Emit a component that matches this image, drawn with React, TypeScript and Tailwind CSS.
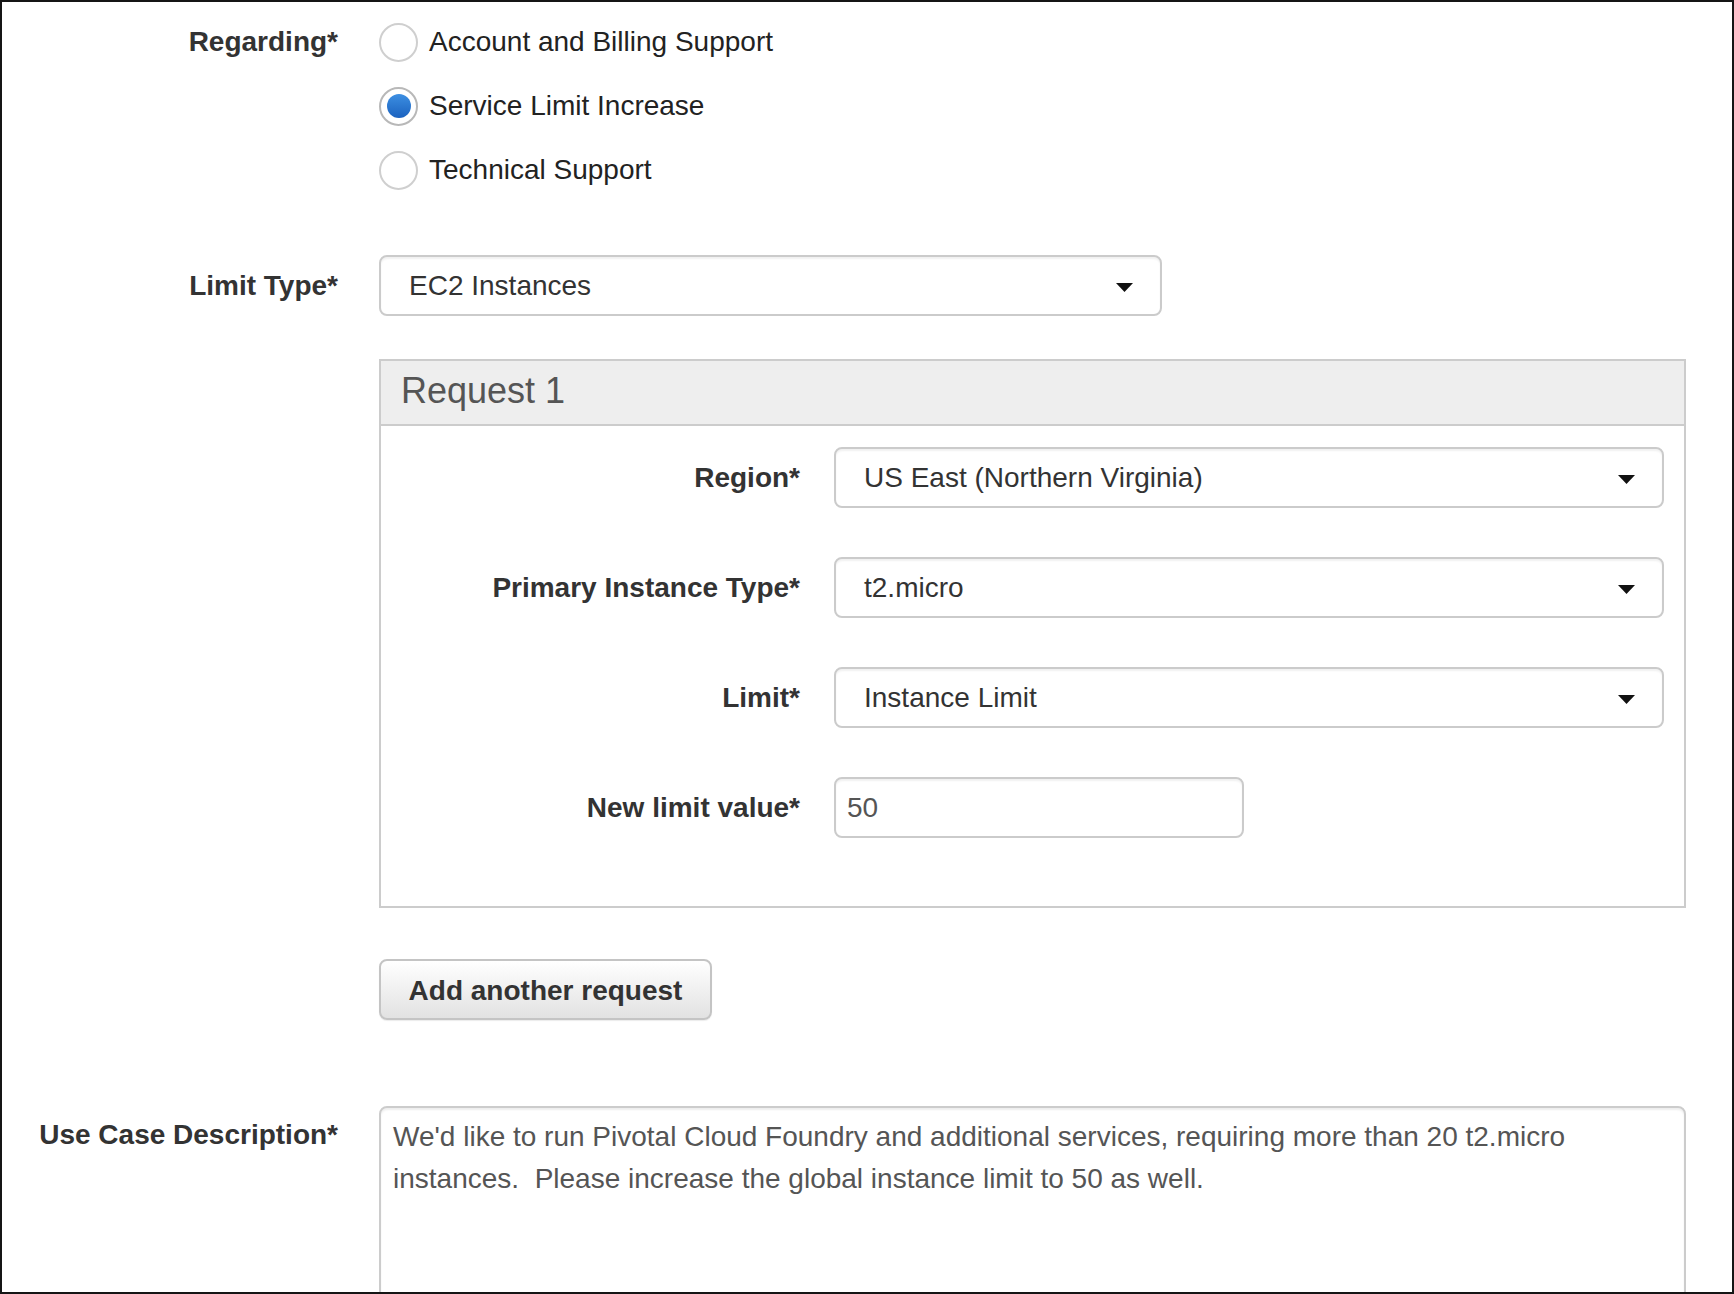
import React from 'react';

function Caret() {
  return (
    <svg width="17" height="9" viewBox="0 0 17 9" className="shrink-0 mt-[3px]">
      <path d="M0 0 L17 0 L8.5 9 Z" fill="#111" />
    </svg>
  );
}

function Select({ value, width }: { value: string; width: string }) {
  return (
    <div
      className={`${width} h-[61px] flex items-center justify-between pl-[28px] pr-[27px] bg-white border-2 border-[#cbcbcb] rounded-[8px] shadow-[inset_0_2px_2px_rgba(0,0,0,0.06)] text-[#333]`}
    >
      <span>{value}</span>
      <Caret />
    </div>
  );
}

function Radio({ label, checked }: { label: string; checked?: boolean }) {
  return (
    <div className="h-[64px] flex items-center gap-[11px]">
      <span
        className={`w-[39px] h-[39px] rounded-full border-2 bg-white flex items-center justify-center ${
          checked ? 'border-[#b8b8b8]' : 'border-[#cfcfcf]'
        }`}
      >
        {checked && (
          <span className="w-[24px] h-[24px] rounded-full bg-gradient-to-b from-[#3d8fe2] to-[#1b62bf]" />
        )}
      </span>
      <span className="text-[#222]">{label}</span>
    </div>
  );
}

export default function App() {
  return (
    <div className="w-[1734px] h-[1294px] overflow-hidden bg-white border-2 border-[#151515] font-['Liberation_Sans',Arial,sans-serif] text-[28px] leading-[40px] text-[#333]">
      {/* Regarding */}
      <div className="flex pt-[8px]">
        <div className="w-[336px] h-[64px] flex items-center justify-end font-bold">Regarding*</div>
        <div className="ml-[41px] flex flex-col">
          <Radio label="Account and Billing Support" />
          <Radio label="Service Limit Increase" checked />
          <Radio label="Technical Support" />
        </div>
      </div>

      {/* Limit type */}
      <div className="flex mt-[53px]">
        <div className="w-[336px] h-[61px] flex items-center justify-end font-bold">Limit Type*</div>
        <div className="ml-[41px]">
          <Select value="EC2 Instances" width="w-[783px]" />
        </div>
      </div>

      {/* Request panel */}
      <div className="flex mt-[43px]">
        <div className="w-[336px]" />
        <div className="ml-[41px] w-[1307px] border-2 border-[#cccccc]">
          <div className="h-[65px] bg-[#eeeeee] border-b-2 border-[#cccccc] flex items-center pl-[20px] pb-[4px] text-[36px] text-[#555]">
            Request 1
          </div>
          <div className="pt-[21px] pb-[68px] flex flex-col gap-[49px]">
            {[
              ['Region*', 'US East (Northern Virginia)'],
              ['Primary Instance Type*', 't2.micro'],
              ['Limit*', 'Instance Limit'],
            ].map(([l, v]) => (
              <div key={l} className="flex">
                <div className="w-[419px] h-[61px] flex items-center justify-end font-bold">{l}</div>
                <div className="ml-[34px]">
                  <Select value={v} width="w-[830px]" />
                </div>
              </div>
            ))}
            <div className="flex">
              <div className="w-[419px] h-[61px] flex items-center justify-end font-bold">New limit value*</div>
              <div className="ml-[34px] w-[410px] h-[61px] flex items-center px-[11px] border-2 border-[#cbcbcb] rounded-[8px] shadow-[inset_0_2px_2px_rgba(0,0,0,0.06)] text-[#555]">
                50
              </div>
            </div>
          </div>
        </div>
      </div>

      {/* Add button */}
      <div className="flex mt-[51px]">
        <div className="w-[336px]" />
        <button className="ml-[41px] w-[333px] h-[61px] pt-[3px] rounded-[8px] border-2 border-[#c4c4c4] bg-gradient-to-b from-[#ffffff] to-[#e2e2e2] font-bold text-[#333] shadow-[0_1px_1px_rgba(0,0,0,0.08)]">
          Add another request
        </button>
      </div>

      {/* Use case */}
      <div className="flex mt-[86px]">
        <div className="w-[336px] pt-[9px] text-right font-bold">Use Case Description*</div>
        <div className="ml-[41px] w-[1307px] h-[260px] border-2 border-[#cccccc] rounded-[8px] shadow-[inset_0_2px_2px_rgba(0,0,0,0.07)] pl-[12px] pr-[20px] pt-[8px] leading-[42px] text-[#555]">
          We'd like to run Pivotal Cloud Foundry and additional services, requiring more than 20 t2.micro
          instances.&nbsp; Please increase the global instance limit to 50 as well.
        </div>
      </div>
    </div>
  );
}
